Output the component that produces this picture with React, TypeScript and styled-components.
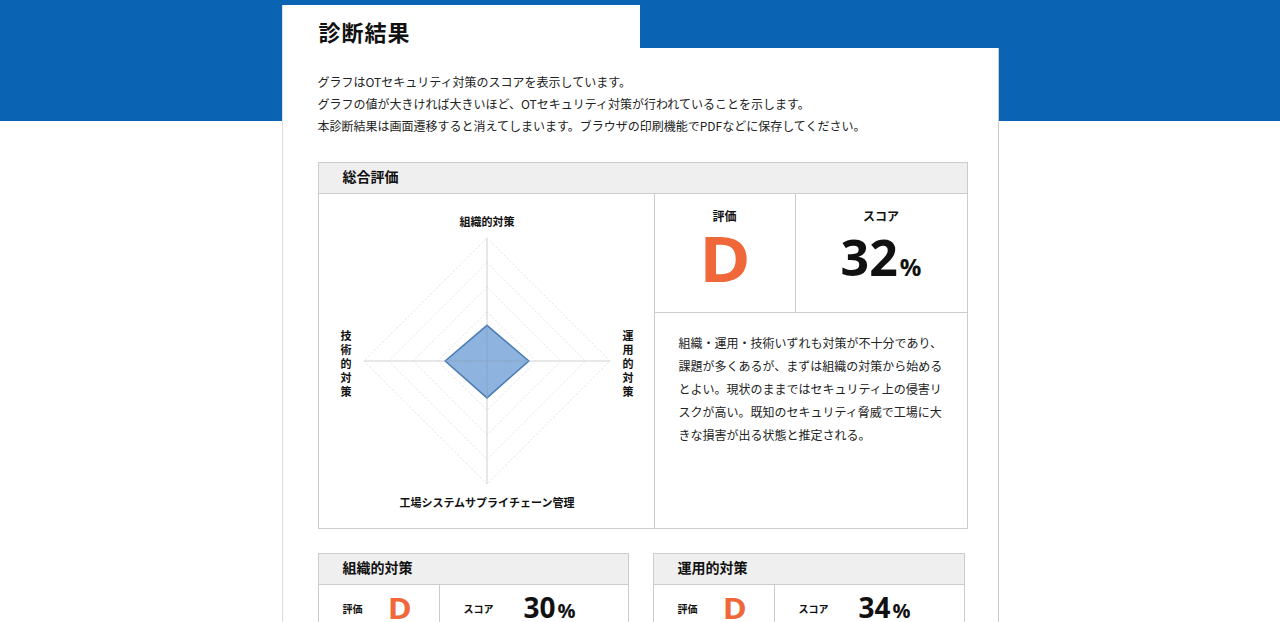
import React from 'react';
import styled, { createGlobalStyle } from 'styled-components';

const GlobalStyle = createGlobalStyle`
  body {
    margin: 0;
    background: linear-gradient(to bottom, #0b63b3 0, #0b63b3 121px, #ffffff 121px);
    font-family: "Noto Sans CJK JP", "Noto Sans", sans-serif;
    color: #111;
  }
`;

const Wrapper = styled.div`
  width: 717px;
  margin: 5px auto 0;
  display: flex;
  flex-direction: column;
`;

const TitleTab = styled.div`
  width: 358px;
  height: 43px;
  box-sizing: border-box;
  padding: 11px 0 0 36px;
  background: #fff;
  border-left: 1px solid #ddd;
`;

const PageTitle = styled.h1`
  margin: 0;
  font-size: 22px;
  line-height: 30px;
  font-weight: 700;
  letter-spacing: 1px;
`;

const Body = styled.div`
  background: #fff;
  border-left: 1px solid #ddd;
  border-right: 1px solid #ccc;
  padding: 23px 30px 40px 35px;
  min-height: 600px;
`;

const Intro = styled.p`
  margin: 0;
  font-size: 12px;
  line-height: 22px;
  color: #222;
`;

const Section = styled.section`
  box-sizing: border-box;
  border: 1px solid #ccc;
`;

const SectionHeader = styled.div`
  height: 31px;
  box-sizing: border-box;
  padding: 0 0 4px 24px;
  background: #efefef;
  border-bottom: 1px solid #ccc;
  display: flex;
  align-items: center;
  font-size: 14px;
  font-weight: 700;
`;

const Overall = styled.div`
  margin-top: 25px;
  width: 650px;
`;

const OverallGrid = styled.div`
  display: grid;
  grid-template-columns: 336px 1fr;
  height: 334px;
`;

const ChartCell = styled.div`
  border-right: 1px solid #ccc;

  svg {
    display: block;
  }
`;

const InfoColumn = styled.div`
  display: grid;
  grid-template-rows: 119px 1fr;
`;

const ScoreRow = styled.div`
  display: grid;
  grid-template-columns: 141px 1fr;
  border-bottom: 1px solid #ccc;
`;

const ScoreCell = styled.div<{ divider?: boolean }>`
  display: flex;
  flex-direction: column;
  align-items: center;
  padding-top: 14px;
  border-right: ${p => (p.divider ? '1px solid #ccc' : 'none')};
`;

const CellLabel = styled.div`
  font-size: 12px;
  font-weight: 700;
  line-height: 16px;
`;

const Grade = styled.div<{ size: number }>`
  font-family: "Open Sans", "Liberation Sans", sans-serif;
  font-weight: 700;
  color: #f0683a;
  font-size: ${p => p.size}px;
  line-height: 0.9;
  transform: scaleX(1.12);
`;

const Score = styled.div<{ size: number }>`
  font-family: "Open Sans", "Liberation Sans", sans-serif;
  font-weight: 700;
  font-size: ${p => p.size}px;
  line-height: 0.9;
  color: #111;
`;

const Percent = styled.span<{ size: number }>`
  font-size: ${p => p.size}px;
  margin-left: 2px;
`;

const Description = styled.p`
  margin: 0;
  padding: 18px 22px 0 24px;
  width: 266px;
  font-size: 12px;
  line-height: 23px;
  color: #222;
`;

const CardsRow = styled.div`
  display: grid;
  grid-template-columns: 311px 312px;
  gap: 24px;
  margin-top: 24px;
`;

const CardBody = styled.div`
  display: grid;
  grid-template-columns: 121px 1fr;
  height: 46px;
`;

const CardCell = styled.div<{ divider?: boolean }>`
  display: flex;
  align-items: center;
  padding-left: 24px;
  border-right: ${p => (p.divider ? '1px solid #ccc' : 'none')};
`;

const SmallLabel = styled.span<{ gap: number }>`
  font-size: 10px;
  font-weight: 700;
  margin-right: ${p => p.gap}px;
`;

const axisLabel = {
  fontSize: 11,
  fontWeight: 700,
  fill: '#111',
  fontFamily: '"Noto Sans CJK JP", sans-serif',
};

const RadarChart: React.FC<{ values: [number, number, number, number] }> = ({ values }) => {
  const cx = 168;
  const cy = 167;
  const r = 123;
  const rings = [0.2, 0.4, 0.6, 0.8, 1];
  const [top, right, bottom, left] = values;
  const pts = [
    [cx, cy - r * top],
    [cx + r * right, cy],
    [cx, cy + r * bottom],
    [cx - r * left, cy],
  ].map(p => p.join(',')).join(' ');
  const vertical = (text: string, x: number, y: number) => (
    <text x={x} y={y} textAnchor="middle" style={axisLabel}>
      {text.split('').map((c, i) => (
        <tspan key={i} x={x} dy={i === 0 ? 0 : 14}>{c}</tspan>
      ))}
    </text>
  );
  return (
    <svg width="335" height="334" viewBox="0 0 335 334">
      {rings.map(k => (
        <polygon key={k}
                 points={`${cx},${cy - r * k} ${cx + r * k},${cy} ${cx},${cy + r * k} ${cx - r * k},${cy}`}
                 fill="none" stroke="#e4e4e4" strokeWidth="1" strokeDasharray="2 2"/>
      ))}
      <line x1={cx} y1={cy - r} x2={cx} y2={cy + r} stroke="#d0d0d0"/>
      <line x1={cx - r} y1={cy} x2={cx + r} y2={cy} stroke="#d0d0d0"/>
      <polygon points={pts} fill="#7aa6d8" fillOpacity="0.85" stroke="#4a7cb3" strokeWidth="1.5"/>
      <line x1={cx} y1={cy - r * top} x2={cx} y2={cy + r * bottom} stroke="#8aa8c8" strokeWidth="0.8"/>
      <line x1={cx - r * left} y1={cy} x2={cx + r * right} y2={cy} stroke="#8aa8c8" strokeWidth="0.8"/>
      <text x={cx} y={32} textAnchor="middle" style={axisLabel}>組織的対策</text>
      <text x={cx} y={313} textAnchor="middle" style={axisLabel}>工場システムサプライチェーン管理</text>
      {vertical('技術的対策', 27, 146)}
      {vertical('運用的対策', 309, 146)}
    </svg>
  );
};

const CategoryCard: React.FC<{ title: string; grade: string; score: number }> = ({ title, grade, score }) => (
  <Section>
    <SectionHeader>{title}</SectionHeader>
    <CardBody>
      <CardCell divider>
        <SmallLabel gap={26}>評価</SmallLabel>
        <Grade size={29}>{grade}</Grade>
      </CardCell>
      <CardCell>
        <SmallLabel gap={30}>スコア</SmallLabel>
        <Score size={28}>{score}<Percent size={20}>%</Percent></Score>
      </CardCell>
    </CardBody>
  </Section>
);

export default function App() {
  return (
    <>
      <GlobalStyle/>
      <Wrapper>
        <TitleTab>
          <PageTitle>診断結果</PageTitle>
        </TitleTab>
        <Body>
          <Intro>
            グラフはOTセキュリティ対策のスコアを表示しています。<br/>
            グラフの値が大きければ大きいほど、OTセキュリティ対策が行われていることを示します。<br/>
            本診断結果は画面遷移すると消えてしまいます。ブラウザの印刷機能でPDFなどに保存してください。
          </Intro>
          <Overall>
            <Section>
              <SectionHeader>総合評価</SectionHeader>
              <OverallGrid>
                <ChartCell>
                  <RadarChart values={[0.29, 0.34, 0.3, 0.34]}/>
                </ChartCell>
                <InfoColumn>
                  <ScoreRow>
                    <ScoreCell divider>
                      <CellLabel>評価</CellLabel>
                      <Grade size={62} style={{ marginTop: 7 }}>D</Grade>
                    </ScoreCell>
                    <ScoreCell>
                      <CellLabel>スコア</CellLabel>
                      <Score size={50} style={{ marginTop: 11 }}>32<Percent size={24}>%</Percent></Score>
                    </ScoreCell>
                  </ScoreRow>
                  <Description>
                    組織・運用・技術いずれも対策が不十分であり、課題が多くあるが、まずは組織の対策から始めるとよい。現状のままではセキュリティ上の侵害リスクが高い。既知のセキュリティ脅威で工場に大きな損害が出る状態と推定される。
                  </Description>
                </InfoColumn>
              </OverallGrid>
            </Section>
          </Overall>
          <CardsRow>
            <CategoryCard title="組織的対策" grade="D" score={30}/>
            <CategoryCard title="運用的対策" grade="D" score={34}/>
          </CardsRow>
        </Body>
      </Wrapper>
    </>
  );
}
